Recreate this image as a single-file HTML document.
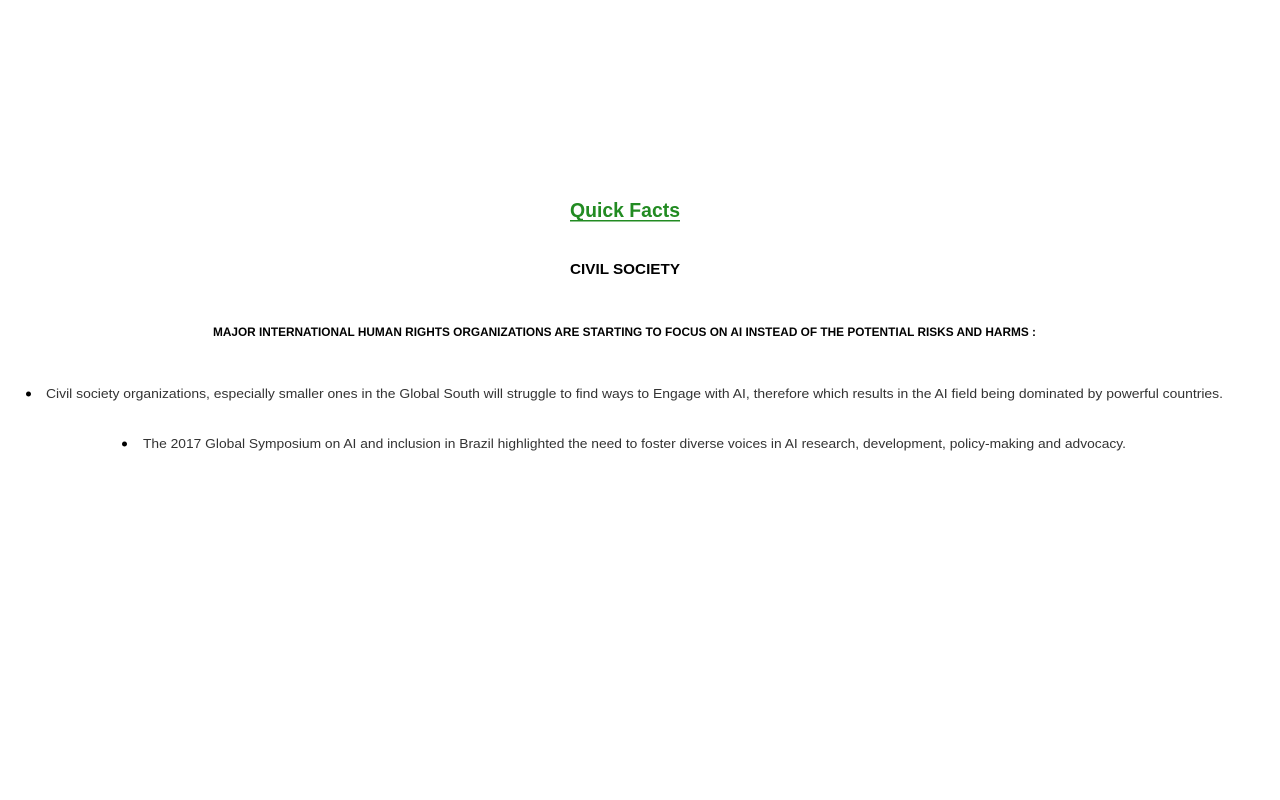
<!DOCTYPE html>
<html><head><meta charset="utf-8"><style>
html,body{margin:0;padding:0;background:#fff;}
svg{display:block}
text{font-family:"Liberation Sans",sans-serif;}
</style></head><body>
<svg width="1280" height="800" viewBox="0 0 1280 800">
<text x="570" y="217" font-size="20" font-weight="bold" fill="#228b22" textLength="110" lengthAdjust="spacingAndGlyphs">Quick Facts</text>
<rect x="570" y="220" width="110" height="1.5" fill="#228b22"/>
<text x="570" y="274" font-size="15" font-weight="bold" fill="#000" textLength="110" lengthAdjust="spacingAndGlyphs">CIVIL SOCIETY</text>
<text x="213" y="336" font-size="12" font-weight="bold" fill="#000" textLength="823" lengthAdjust="spacingAndGlyphs">MAJOR INTERNATIONAL HUMAN RIGHTS ORGANIZATIONS ARE STARTING TO FOCUS ON AI INSTEAD OF THE POTENTIAL RISKS AND HARMS :</text>
<circle cx="28.5" cy="394" r="2.5" fill="#000"/>
<text x="46" y="398" font-size="13" fill="#333" textLength="1177" lengthAdjust="spacingAndGlyphs">Civil society organizations, especially smaller ones in the Global South will struggle to find ways to Engage with AI, therefore which results in the AI field being dominated by powerful countries.</text>
<circle cx="124.5" cy="444" r="2.5" fill="#000"/>
<text x="143" y="448" font-size="13" fill="#333" textLength="983" lengthAdjust="spacingAndGlyphs">The 2017 Global Symposium on AI and inclusion in Brazil highlighted the need to foster diverse voices in AI research, development, policy-making and advocacy.</text>
</svg>
</body></html>
